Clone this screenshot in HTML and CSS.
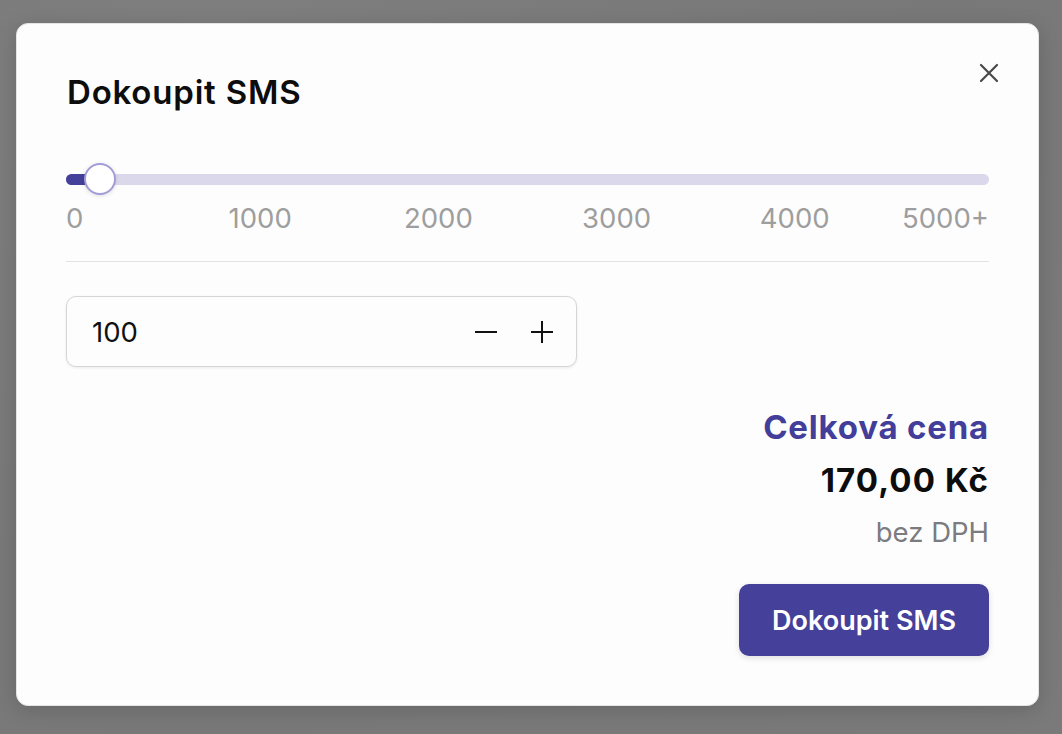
FILE: index.html
```html
<!DOCTYPE html>
<html lang="cs">
<head>
<meta charset="utf-8">
<title>Dokoupit SMS</title>
<link rel="stylesheet" href="styles.css">
</head>
<body>
<div class="backdrop">
  <div class="modal">
    <div class="modal-header">
      <h2 class="title">Dokoupit SMS</h2>
      <button class="close" aria-label="Zavřít">
        <svg width="20" height="20" viewBox="0 0 20 20"><path d="M2 2L18 18M18 2L2 18" stroke="#48484a" stroke-width="2.2" stroke-linecap="round"/></svg>
      </button>
    </div>
    <div class="slider">
      <div class="track"><div class="fill" style="width:2%"></div></div>
      <div class="thumb"></div>
    </div>
    <div class="ticks">
      <div class="tick"><span>0</span></div>
      <div class="tick"><span>1000</span></div>
      <div class="tick"><span>2000</span></div>
      <div class="tick"><span>3000</span></div>
      <div class="tick"><span>4000</span></div>
      <div class="tick"><span>5000+</span></div>
    </div>
    <hr class="divider">
    <div class="stepper">
      <span class="value">100</span>
      <div class="stepper-buttons">
        <button class="step" aria-label="Méně">
          <svg width="22" height="22" viewBox="0 0 22 22"><path d="M0 11H22" stroke="#111" stroke-width="2"/></svg>
        </button>
        <button class="step" aria-label="Více">
          <svg width="22" height="22" viewBox="0 0 22 22"><path d="M0 11H22M11 0V22" stroke="#111" stroke-width="2"/></svg>
        </button>
      </div>
    </div>
    <div class="summary">
      <div class="total-label">Celková cena</div>
      <div class="total-price">170,00 Kč</div>
      <div class="total-note">bez DPH</div>
      <button class="buy">Dokoupit SMS</button>
    </div>
  </div>
</div>
</body>
</html>
```
FILE: styles.css
```css
* { box-sizing: border-box; }
html, body {
  margin: 0;
  padding: 0;
  height: 100%;
}
body {
  font-family: Inter, "Noto Sans", "Liberation Sans", sans-serif;
  background: #797979;
  color: #111;
}
.backdrop {
  height: 100%;
  padding: 23px 23px 0 16px;
  background: radial-gradient(ellipse at 20% 0%, #7e7e7e 0%, #787878 60%, #7a7a7a 100%);
}
.modal {
  width: 1023px;
  background: #fdfdfd;
  border: 1px solid #e4e4e6;
  border-radius: 12px;
  padding: 39px 49px 49px 49px;
  box-shadow: 0 4px 20px rgba(0,0,0,0.15);
}
.modal-header {
  display: flex;
  justify-content: space-between;
  align-items: flex-start;
}
.title {
  margin: 9px 0 0 1px;
  font-size: 33px;
  font-weight: 600;
  line-height: 40px;
  color: #0d0d0d;
  letter-spacing: 0.8px;
}
.close {
  margin: 0 -10px 0 0;
  padding: 0;
  border: 0;
  background: none;
  width: 20px;
  height: 20px;
  display: flex;
}
.slider {
  position: relative;
  margin-top: 51px;
  height: 32px;
  display: flex;
  align-items: center;
}
.track {
  flex: 1;
  height: 11px;
  border-radius: 6px;
  background: #dad8ea;
  overflow: hidden;
  padding: 0 16px;
  display: flex;
}
.fill {
  height: 100%;
  background: #45409a;
  margin-left: -16px;
  padding-left: 16px;
  box-sizing: content-box;
}
.thumb {
  position: absolute;
  left: 18px;
  top: 0;
  width: 32px;
  height: 32px;
  border-radius: 50%;
  background: #fff;
  border: 2px solid #a29dd8;
  box-shadow: 0 1px 4px rgba(0,0,0,0.12);
}
.ticks {
  margin-top: 7px;
  display: flex;
  justify-content: space-between;
  padding: 0 16px;
  font-size: 27.5px;
  line-height: 32px;
  color: #9e9e9e;
}
.tick {
  width: 0;
  display: flex;
  justify-content: center;
  white-space: nowrap;
}
.tick:first-child { justify-content: flex-start; }
.tick:first-child span { margin-left: -16px; }
.tick:last-child { justify-content: flex-end; }
.tick:last-child span { margin-right: -16px; }
.divider {
  margin: 27px 0 0 0;
  border: 0;
  border-top: 1px solid #e2e2e4;
  height: 0;
}
.stepper {
  margin-top: 34px;
  width: 511px;
  height: 71px;
  border: 1.5px solid #d6d6da;
  border-radius: 10px;
  display: flex;
  align-items: center;
  justify-content: space-between;
  padding: 0 23px 0 25px;
  box-shadow: 0 1px 3px rgba(0,0,0,0.08);
  background: #fdfdfd;
}
.value {
  font-size: 27.5px;
  line-height: 32px;
  color: #111;
}
.stepper-buttons {
  display: flex;
  gap: 34px;
}
.step {
  padding: 0;
  border: 0;
  background: none;
  width: 22px;
  height: 22px;
  display: flex;
}
.summary {
  display: flex;
  flex-direction: column;
  align-items: flex-end;
}
.total-label {
  margin-top: 40px;
  font-size: 33px;
  line-height: 40px;
  font-weight: 700;
  color: #433e99;
  letter-spacing: 0.8px;
}
.total-price {
  margin-top: 13px;
  font-size: 33px;
  line-height: 40px;
  font-weight: 700;
  color: #0d0d0d;
  letter-spacing: 1.1px;
}
.total-note {
  margin-top: 16px;
  font-size: 27.5px;
  line-height: 32px;
  color: #7b7b80;
}
.buy {
  margin-top: 36px;
  width: 250px;
  height: 72px;
  border: 0;
  border-radius: 10px;
  background: #45409a;
  color: #fff;
  font-family: inherit;
  font-size: 27px;
  font-weight: 600;
  box-shadow: 0 2px 6px rgba(0,0,0,0.12);
}
```
